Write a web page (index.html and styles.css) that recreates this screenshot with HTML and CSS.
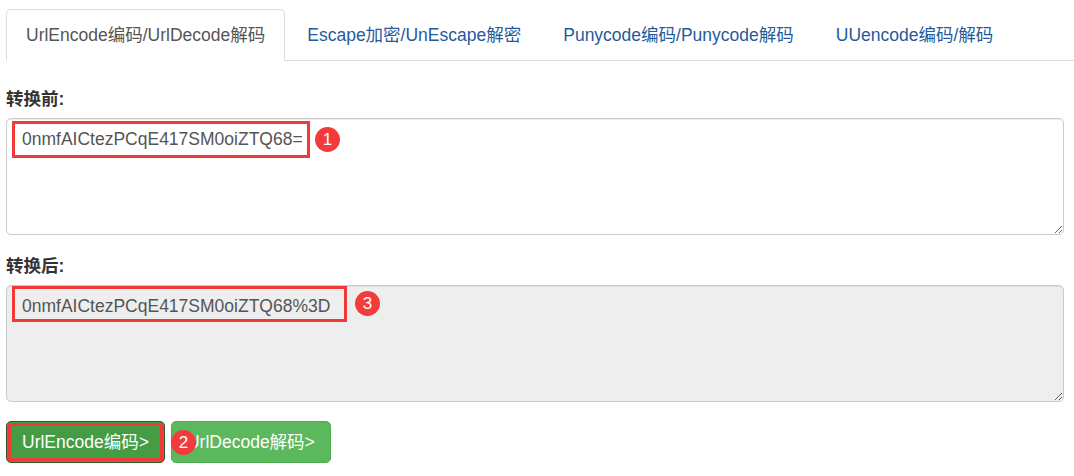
FILE: index.html
```
<!DOCTYPE html>
<html lang="zh-CN">
<head>
<meta charset="utf-8">
<title>UrlEncode编码/UrlDecode解码</title>
<link rel="stylesheet" href="styles.css">
</head>
<body>
<div class="page">
  <ul class="tabs">
    <li class="tab active">UrlEncode编码/UrlDecode解码</li>
    <li class="tab">Escape加密/UnEscape解密</li>
    <li class="tab">Punycode编码/Punycode解码</li>
    <li class="tab">UUencode编码/解码</li>
  </ul>
  <div class="content">
    <div class="group">
      <label class="label">转换前:</label>
      <div class="field">
        <textarea class="area">0nmfAICtezPCqE417SM0oiZTQ68=</textarea>
        <span class="mark mark-in"></span>
        <span class="badge badge-1">1</span>
      </div>
    </div>
    <div class="group">
      <label class="label">转换后:</label>
      <div class="field">
        <textarea class="area area-ro" readonly>0nmfAICtezPCqE417SM0oiZTQ68%3D</textarea>
        <span class="mark mark-out"></span>
        <span class="badge badge-3">3</span>
      </div>
    </div>
    <div class="actions">
      <button class="btn btn-active">UrlEncode编码&gt;<span class="mark mark-btn"></span></button>
      <button class="btn">UrlDecode解码&gt;</button>
      <span class="badge badge-2">2</span>
    </div>
  </div>
</div>
</body>
</html>
```
FILE: styles.css
```
* { box-sizing: border-box; }
html, body { margin: 0; background: #fff; }
body {
  font-family: "Liberation Sans", Arial, "Noto Sans CJK SC", sans-serif;
  font-size: 17.5px;
  line-height: 25px;
  color: #333;
}
.page { padding: 9px 10px 0 6px; }
.tabs {
  display: flex;
  list-style: none;
  margin: 0 -10px 0 0;
  padding: 0;
  border-bottom: 1px solid #ddd;
}
.tab {
  margin: 0 2px -1px 0;
  padding: 12.5px 19px;
  line-height: 25px;
  border: 1px solid transparent;
  border-radius: 5px 5px 0 0;
  color: #275a9c;
  white-space: nowrap;
}
.tab.active {
  color: #555;
  background: #fff;
  border-color: #ddd #ddd transparent;
}
.content { padding-top: 26px; }
.group { margin-bottom: 19px; }
.label {
  display: block;
  font-weight: bold;
  margin-bottom: 6px;
  color: #333;
}
.field { position: relative; }
.area {
  display: block;
  width: 100%;
  height: 117px;
  margin: 0;
  padding: 7.5px 15px;
  font: inherit;
  line-height: 25px;
  color: #555;
  background: #fff;
  border: 1px solid #ccc;
  border-radius: 5px;
  box-shadow: inset 0 1px 1px rgba(0,0,0,.075);
  resize: both;
  outline: none;
}
.area-ro { background: #eee; }
.mark {
  position: absolute;
  border: 3px solid #f03a3a;
  pointer-events: none;
}
.mark-in { left: 6px; top: 3px; width: 298px; height: 37px; }
.mark-out { left: 6px; top: 1px; width: 335px; height: 36px; }
.badge {
  position: absolute;
  width: 25px;
  height: 25px;
  border-radius: 50%;
  background: #f33b3b;
  color: #fff;
  font-size: 17px;
  line-height: 25px;
  text-align: center;
}
.badge-1 { left: 309px; top: 9px; }
.badge-3 { left: 349px; top: 6px; }
.actions {
  position: relative;
  display: flex;
  gap: 6px;
}
.btn {
  position: relative;
  height: 42px;
  padding: 7.5px 15px;
  font: inherit;
  line-height: 25px;
  color: #fff;
  background: #5cb85c;
  border: 1px solid #4cae4c;
  border-radius: 5px;
  white-space: nowrap;
}
.btn-active {
  background: #449d44;
  border-color: #2a5a2a;
}
.mark-btn { left: 1px; top: 1px; right: 1px; bottom: 1px; }
.badge-2 { left: 165px; top: 9px; }
```
